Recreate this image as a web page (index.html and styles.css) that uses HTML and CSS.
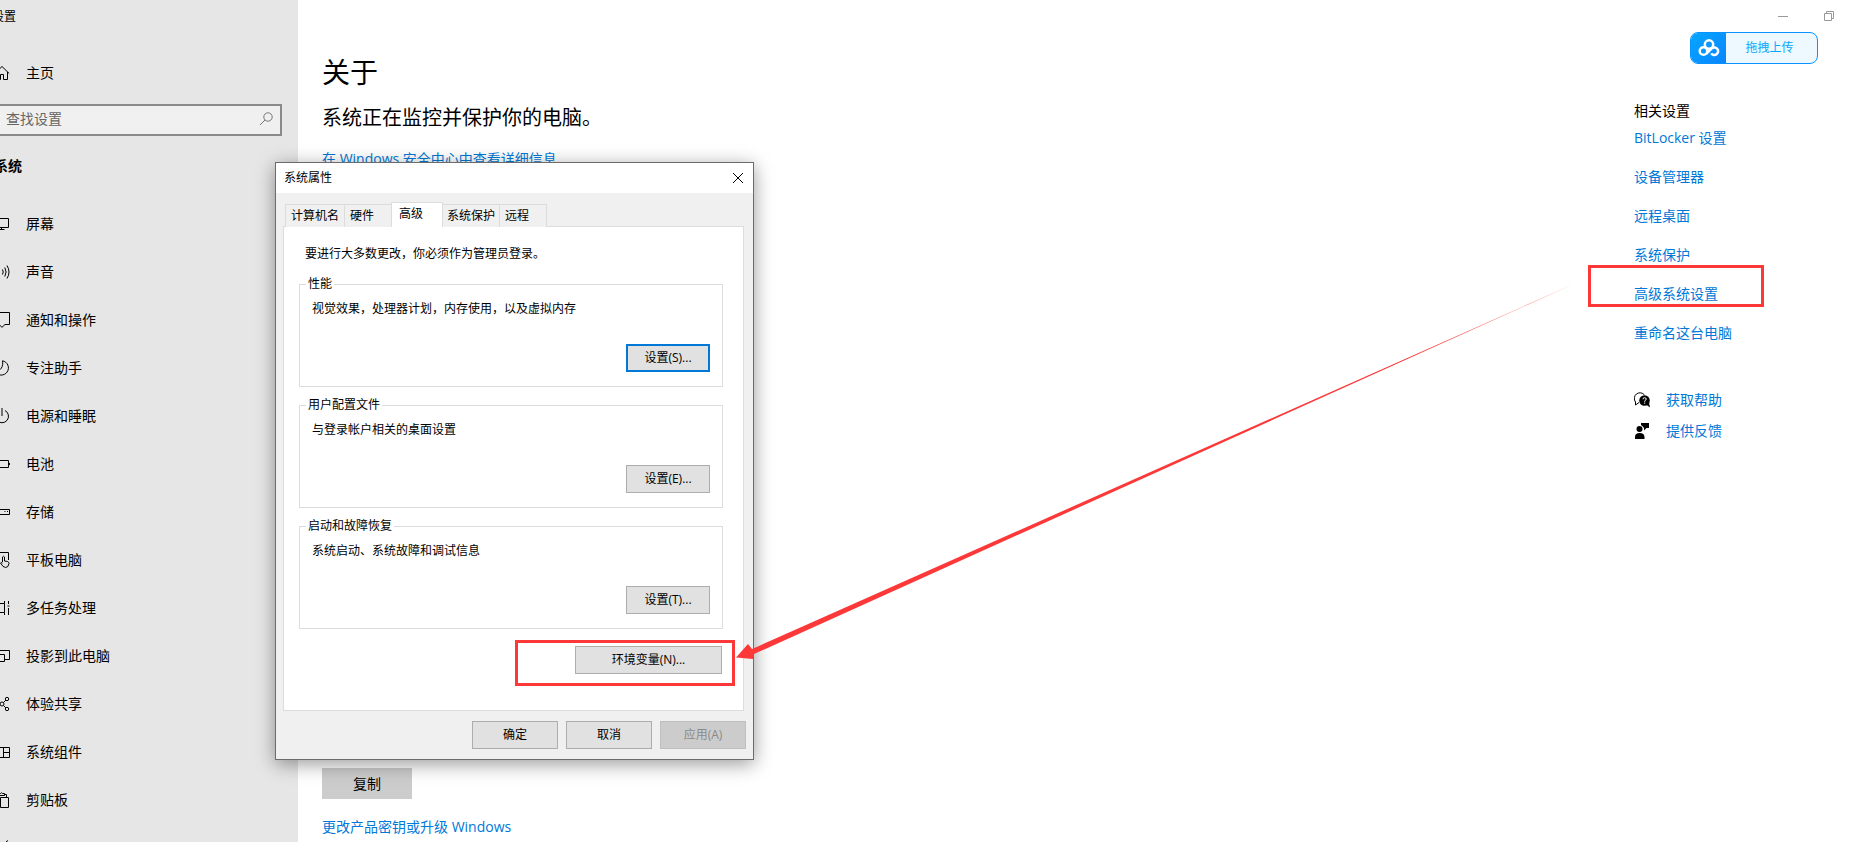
FILE: index.html
```
<!doctype html>
<html lang="zh-CN">
	<head>
		<meta charset="utf-8" />
		<title>设置</title>
		<meta name="viewport" content="width=device-width,initial-scale=1.0" />
		<link rel="stylesheet" href="styles.css">
	</head>
	<body>
		<div class="sidebar">
			<div class="sidebar-title">设置</div>
			<a class="nav-item home" href="#">
				<svg class="icon" viewBox="0 0 16 16"><path d="M.8 8.500 8 1.500l7.200 7M2.500 7v7.500h4v-5h3v5h4V7"/></svg>
				<span>主页</span>
			</a>
			<div class="search">
				<input type="text" placeholder="查找设置" aria-label="查找设置">
				<svg class="icon search-icon" viewBox="0 0 16 16"><circle cx="10" cy="6" r="4.200"/><path d="M7 9 2 14"/></svg>
			</div>
			<h2 class="sidebar-heading">系统</h2>
			<ul class="nav">
				<li><a class="nav-item" href="#">
					<svg class="icon" viewBox="0 0 16 16"><path d="M.5 2.500h14v9H.5zM7.500 11.500v2M4.500 13.500h6"/></svg>
					<span>屏幕</span></a></li>
				<li><a class="nav-item" href="#">
					<svg class="icon" viewBox="0 0 16 16"><path d="M0 6.500h2l3-3v9l-3-3H0zM8.500 5.500q1.500 2.500 0 5M10.800 3.500q2.600 4.500 0 9M13 1.500q4 6.500 0 13"/></svg>
					<span>声音</span></a></li>
				<li><a class="nav-item" href="#">
					<svg class="icon" viewBox="0 0 16 16"><path d="M.5.5h15v12H11L8 15.300 5 12.500H.5z"/></svg>
					<span>通知和操作</span></a></li>
				<li><a class="nav-item" href="#">
					<svg class="icon" viewBox="0 0 16 16"><path d="M8.500.8A7.200 7.200 0 1 1 1 11.500C7 11 9.500 6.500 8.500.8z"/></svg>
					<span>专注助手</span></a></li>
				<li><a class="nav-item" href="#">
					<svg class="icon" viewBox="0 0 16 16"><path d="M8 0v8"/><path d="M11 2.500a6.500 6.500 0 1 1-6 0"/></svg>
					<span>电源和睡眠</span></a></li>
				<li><a class="nav-item" href="#">
					<svg class="icon" viewBox="0 0 16 16"><path d="M.5 4.500h14v7H.5zM15.500 7v2"/></svg>
					<span>电池</span></a></li>
				<li><a class="nav-item" href="#">
					<svg class="icon" viewBox="0 0 16 16"><path d="M.5 5.500h15v5H.5zM10.500 7.500h1M13 7.500h1"/></svg>
					<span>存储</span></a></li>
				<li><a class="nav-item" href="#">
					<svg class="icon" viewBox="0 0 16 16"><path d="M6 12.500H.5v-12h14V8M8.500 10V5q1-1.500 2 0v4l3 .5q1.500.5 1.500 2-.5 4-3.500 4-2.500 0-5-4.500 1-1 2 0"/></svg>
					<span>平板电脑</span></a></li>
				<li><a class="nav-item" href="#">
					<svg class="icon" viewBox="0 0 16 16"><path d="M.5 3.500h10v9H.5zM1.500 1v2.500M10.500 1v2.500M1.500 12.500V15M10.500 12.500V15M14.500 1v3M14.500 8v7M13.500 6h2"/></svg>
					<span>多任务处理</span></a></li>
				<li><a class="nav-item" href="#">
					<svg class="icon" viewBox="0 0 16 16"><path d="M3 9.500H.5v-7h15v9H10M4.500 6.500h6v7h-6zM5 13.500h5"/></svg>
					<span>投影到此电脑</span></a></li>
				<li><a class="nav-item" href="#">
					<svg class="icon" viewBox="0 0 16 16"><circle cx="8" cy="8" r="2"/><circle cx="13" cy="3" r="1.700"/><circle cx="13" cy="13" r="1.700"/><path d="M1 8h5M9.500 6.500 11.800 4.200M9.500 9.500l2.300 2.300"/></svg>
					<span>体验共享</span></a></li>
				<li><a class="nav-item" href="#">
					<svg class="icon" viewBox="0 0 16 16"><path d="M.5 3.500h15v10H.5zM9.500 3.500v10M9.500 8.500h6"/></svg>
					<span>系统组件</span></a></li>
				<li><a class="nav-item" href="#">
					<svg class="icon" viewBox="0 0 16 16"><path d="M6 14.500H1.500v-12h3M4.500 3.500v-2h2q1-1.500 2 0h2v2h-6M10.500 2.500h2v3M6.500 5.500h8v10h-8z"/></svg>
					<span>剪贴板</span></a></li>
				<li><a class="nav-item" href="#" aria-label="更多">
					<svg class="icon" viewBox="0 0 16 16"><path d="M2 14 12 2l2-1.500"/></svg></a></li>
			</ul>
		</div>

		<div class="content">
			<h1>关于</h1>
			<p class="status">系统正在监控并保护你的电脑。</p>
			<a href="#">在 Windows 安全中心中查看详细信息</a>
			<button class="copy" type="button">复制</button>
			<a href="#">更改产品密钥或升级 Windows</a>
		</div>

		<div class="related">
			<div class="window-controls">
				<button type="button" aria-label="最小化"><svg viewBox="0 0 10 10"><path d="M0 5.500h10"/></svg></button>
				<button type="button" aria-label="还原"><svg viewBox="0 0 10 10"><path d="M.5 2.500h7v7h-7zM2.500 2.500v-2h7v7h-2"/></svg></button>
			</div>
			<button class="upload" type="button">
				<span class="upload-logo">
					<svg viewBox="0 0 22 18"><circle cx="11" cy="5.500" r="4.200"/><circle cx="5.500" cy="12" r="3.800"/><path d="M8.500 14.500 14 9.200a3.800 3.800 0 1 1-.8 5.200"/></svg>
				</span>
				<span class="upload-text">拖拽上传</span>
			</button>
			<h3>相关设置</h3>
			<ul class="links">
				<li><a href="#">BitLocker 设置</a></li>
				<li><a href="#">设备管理器</a></li>
				<li><a href="#">远程桌面</a></li>
				<li><a href="#">系统保护</a></li>
				<li><a class="marked marked-link" href="#">高级系统设置</a></li>
				<li><a href="#">重命名这台电脑</a></li>
			</ul>
			<ul class="support">
				<li>
					<svg viewBox="0 0 16 16"><path d="M5 10.500 1.500 13V10A5 5 0 1 1 10.500 3" fill="none" stroke="#000"/><circle cx="10.500" cy="8.500" r="5.300"/><path d="M12 12.500l4 3-1-5z"/><path d="M9 7.300q0-1.600 1.600-1.600t1.600 1.400q0 1-1.500 1.800v.8M10.700 10.500v1.200" fill="none" stroke="#fff"/></svg>
					<a href="#">获取帮助</a>
				</li>
				<li>
					<svg viewBox="0 0 16 16"><circle cx="5.500" cy="6" r="3"/><path d="M1 16v-2q0-4 4.700-4t4.800 4v2zM7 0h8v5h-2.500L10 7.500V5L8.800 3.500 7 2z"/></svg>
					<a href="#">提供反馈</a>
				</li>
			</ul>
		</div>

		<div class="dialog" role="dialog" aria-labelledby="dialogTitle">
			<div class="dialog-bar">
				<span id="dialogTitle">系统属性</span>
				<button class="close" type="button" aria-label="关闭"><svg viewBox="0 0 10 10"><path d="M0 0l10 10M10 0 0 10"/></svg></button>
			</div>
			<div class="tabs" role="tablist">
				<button class="tab" type="button" role="tab">计算机名</button>
				<button class="tab" type="button" role="tab">硬件</button>
				<button class="tab active" type="button" role="tab" aria-selected="true">高级</button>
				<button class="tab" type="button" role="tab">系统保护</button>
				<button class="tab" type="button" role="tab">远程</button>
			</div>
			<div class="panel" role="tabpanel">
				<p class="notice">要进行大多数更改，你必须作为管理员登录。</p>
				<fieldset>
					<legend>性能</legend>
					<p>视觉效果，处理器计划，内存使用，以及虚拟内存</p>
					<button class="btn focus" type="button">设置(S)...</button>
				</fieldset>
				<fieldset>
					<legend>用户配置文件</legend>
					<p>与登录帐户相关的桌面设置</p>
					<button class="btn" type="button">设置(E)...</button>
				</fieldset>
				<fieldset>
					<legend>启动和故障恢复</legend>
					<p>系统启动、系统故障和调试信息</p>
					<button class="btn" type="button">设置(T)...</button>
				</fieldset>
				<div class="env marked">
					<button class="btn" type="button">环境变量(N)...</button>
				</div>
			</div>
			<div class="dialog-footer">
				<button class="btn" type="button">确定</button>
				<button class="btn" type="button">取消</button>
				<button class="btn" type="button" disabled>应用(A)</button>
			</div>
		</div>

		<svg class="arrow" viewBox="0 0 840 378">
			<defs>
				<linearGradient id="fade" x1="0" y1="0" x2="1" y2="0">
					<stop offset=".8" stop-color="#fd3838"/>
					<stop offset="1" stop-color="#fd3838" stop-opacity=".6"/>
				</linearGradient>
			</defs>
			<path fill="url(#fade)" d="M0 374.500 12 361l4 5L840 0 18 371l-1 5z"/>
		</svg>
	</body>
</html>
```

FILE: styles.css
```
*{
	margin:0;
	padding:0;
	box-sizing:border-box;
}
body{
	display:flex;
	position:relative;
	height:100vh;
	overflow:hidden;
	background-color:#fff;
	color:#000;
	font:14px/20px "Open Sans","Noto Sans CJK SC",sans-serif;
}
button,input{
	font:inherit;
	color:inherit;
}
ul{
	list-style:none;
}
a{
	color:#0078d7;
	text-decoration:none;
}

/* 左侧导航 */
.sidebar{
	flex:none;
	width:306px;
	margin-left:-8px;
	padding-right:16px;
	background-color:#e6e6e6;
}
.sidebar-title{
	padding-top:7px;
	font-size:12px;
}
.nav-item{
	display:flex;
	align-items:center;
	gap:16px;
	height:48px;
	padding-left:2px;
	color:#000;
}
.home{
	margin-top:22px;
}
.icon{
	flex:none;
	width:16px;
	height:16px;
	fill:none;
	stroke:#000;
}
.search{
	display:flex;
	align-items:center;
	height:32px;
	margin-top:7px;
	padding:0 6px 2px 12px;
	border:2px solid #8a8a8a;
	background-color:#f0f0f0;
}
.search input{
	flex:1;
	min-width:0;
	border:0;
	outline:0;
	background:none;
}
.search input::placeholder{
	color:#666;
	opacity:1;
}
.search-icon{
	stroke:#777;
}
.sidebar-heading{
	margin:20px 0 24px;
	padding-left:2px;
	font-size:14px;
	font-weight:bold;
}

/* 中间内容 */
.content{
	flex:1;
	display:flex;
	flex-direction:column;
	align-items:flex-start;
	padding:52px 24px 0;
}
h1{
	font-size:28px;
	line-height:40px;
	font-weight:normal;
}
.status{
	margin:11px 0 16px;
	font-size:20px;
	line-height:30px;
}
.copy{
	width:90px;
	height:31px;
	margin:599px 0 18px;
	border:0;
	background-color:#ccc;
}

/* 右侧相关设置 */
.related{
	flex:none;
	position:relative;
	width:232px;
}
.window-controls{
	display:flex;
	justify-content:flex-end;
	padding-right:14px;
}
.window-controls button{
	width:46px;
	height:32px;
	border:0;
	background:none;
}
.window-controls svg{
	display:block;
	width:10px;
	height:10px;
	margin:auto;
	fill:none;
	stroke:#999;
}
.upload{
	position:absolute;
	top:32px;
	right:48px;
	display:flex;
	width:128px;
	height:32px;
	border:1px solid #0a93ff;
	border-radius:8px;
	overflow:hidden;
	background-color:#edf8ff;
	color:#06a7ff;
	font-size:12px;
}
.upload-logo{
	display:flex;
	align-items:center;
	justify-content:center;
	width:35px;
	height:30px;
	background:linear-gradient(135deg,#06a7ff,#0a84ff);
}
.upload-logo svg{
	width:22px;
	height:18px;
	fill:none;
	stroke:#fff;
	stroke-width:2.5;
}
.upload-text{
	flex:1;
	padding-right:4px;
	line-height:30px;
}
h3{
	margin-top:69px;
	font-size:14px;
	font-weight:normal;
}
.links{
	margin-top:7px;
}
.links li{
	margin-bottom:19px;
}
.support{
	margin-top:47px;
}
.support li{
	display:flex;
	align-items:center;
	gap:16px;
	margin-bottom:11px;
}
.support svg{
	width:16px;
	height:16px;
}

/* 红框标记 */
.marked{
	display:inline-block;
	position:relative;
}
.marked::after{
	content:"";
	position:absolute;
	border:3px solid #fd3838;
	pointer-events:none;
}
.marked-link::after{
	top:-19px;
	right:-46px;
	bottom:-3px;
	left:-46px;
}
.env::after{
	top:-6px;
	right:-13px;
	bottom:-12px;
	left:-60px;
}

/* 系统属性窗口 */
.dialog{
	position:absolute;
	top:162px;
	left:275px;
	width:479px;
	border:1px solid #6b6b6b;
	background-color:#f0f0f0;
	box-shadow:0 4px 18px rgba(0,0,0,.4);
	font-size:12px;
}
.dialog-bar{
	display:flex;
	align-items:center;
	justify-content:space-between;
	height:30px;
	padding:0 10px 0 8px;
	background-color:#fff;
}
.close{
	width:10px;
	height:10px;
	border:0;
	background:none;
}
.close svg{
	display:block;
	fill:none;
	stroke:#000;
}
.tabs{
	display:flex;
	align-items:flex-end;
	margin-top:9px;
	padding-left:9px;
}
.tab{
	position:relative;
	min-width:48px;
	height:23px;
	padding:0 5px;
	border:1px solid #dcdcdc;
	border-bottom:0;
	background-color:#f0f0f0;
	text-align:left;
}
.tab + .tab{
	margin-left:-1px;
}
.tab.active{
	z-index:1;
	min-width:52px;
	height:25px;
	padding:0 7px 3px;
	background-color:#fff;
}
.tab.active + .tab{
	padding:0 4px;
}
.panel{
	display:flex;
	flex-direction:column;
	margin:-1px 9px 0 7px;
	padding:17px 20px 36px 15px;
	border:1px solid #dcdcdc;
	background-color:#fff;
}
.notice{
	padding-left:6px;
	margin-bottom:12px;
}
fieldset{
	margin-bottom:10px;
	padding:7px 12px 14px;
	border:1px solid #dcdcdc;
}
legend{
	margin-left:-6px;
	padding:0 2px;
	line-height:16px;
}
.btn{
	display:block;
	height:28px;
	border:1px solid #adadad;
	background-color:#e1e1e1;
}
fieldset .btn{
	width:84px;
	margin:25px 0 0 auto;
}
.btn.focus{
	border:2px solid #0078d7;
}
.btn:disabled{
	border-color:#bfbfbf;
	background-color:#ccc;
	color:#8a8a8a;
}
.env{
	align-self:flex-end;
	margin:7px 1px 0 0;
}
.env .btn{
	width:147px;
}
.dialog-footer{
	display:flex;
	justify-content:flex-end;
	gap:8px;
	padding:10px 7px;
}
.dialog-footer .btn{
	width:86px;
}

.arrow{
	position:absolute;
	top:283px;
	left:736px;
	width:840px;
	height:378px;
	pointer-events:none;
}
```
